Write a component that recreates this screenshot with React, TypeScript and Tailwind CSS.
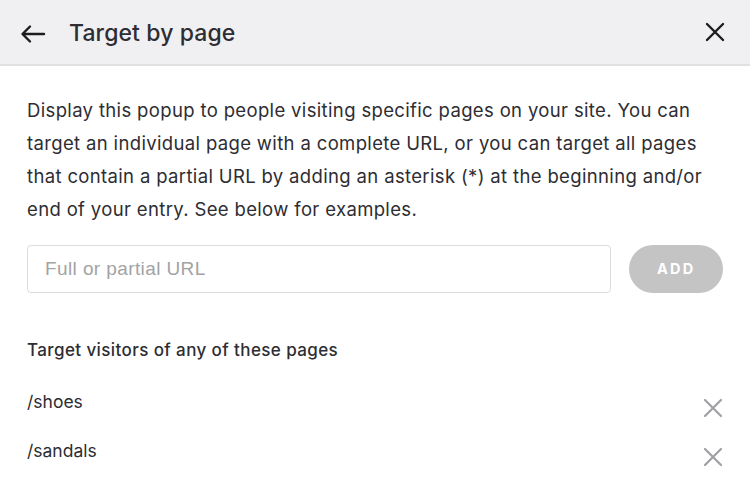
import React from "react";

const XIcon = ({ className }: { className?: string }) => (
  <svg viewBox="0 0 24 24" className={className} fill="none" stroke="currentColor" strokeLinecap="round">
    <path d="M4 4L20 20M20 4L4 20" />
  </svg>
);

const pages = ["/shoes", "/sandals"];

const App = () => {
  const [url, setUrl] = React.useState("");

  return (
    <div className="w-[750px] h-[492px] bg-white text-[#2d2d33] overflow-hidden font-['Inter',sans-serif]">
      <div className="h-[66px] flex items-center bg-[#f0f0f2] border-b-2 border-b-[#e1e1e3] pl-[20px] pr-[23px]">
        <svg viewBox="0 0 26 20" className="w-[26px] h-[20px] mt-[3px] text-[#1c1c20]" fill="none" stroke="currentColor" strokeWidth="2.4" strokeLinecap="round" strokeLinejoin="round">
          <path d="M24 10H3M10 2.5L2.5 10L10 17.5" />
        </svg>
        <h1 className="ml-[23px] mt-[3px] text-[23px] font-medium tracking-[0.1px]">Target by page</h1>
        <button className="ml-auto text-[#1c1c20]">
          <XIcon className="w-[24px] h-[24px] stroke-[2.4]" />
        </button>
      </div>

      <div className="px-[27px] pt-[28px]">
        <p className="text-[18.5px] leading-[33px] tracking-[0.35px] whitespace-nowrap">
          Display this popup to people visiting specific pages on your site. You can
          <br />
          target an individual page with a complete URL, or you can target all pages
          <br />
          that contain a partial URL by adding an asterisk (*) at the beginning and/or
          <br />
          end of your entry. See below for examples.
        </p>

        <div className="flex items-center gap-[18px] mt-[19px]">
          <input
            className="w-[586px] h-[48px] border border-[#dcdcdc] rounded-[4px] px-[17px] text-[19px] tracking-[0.4px] font-['Liberation_Sans',sans-serif] placeholder:text-[#a3a3a3] outline-none"
            placeholder="Full or partial URL"
            value={url}
            onChange={(e) => setUrl(e.target.value)}
          />
          <button className="w-[94px] h-[48px] rounded-full bg-[#c4c4c4] text-white text-[14.5px] font-bold tracking-[2.2px]">
            ADD
          </button>
        </div>

        <h2 className="mt-[45px] text-[17px] font-medium tracking-[0.4px]">Target visitors of any of these pages</h2>

        <div className="mt-[17px] flex flex-col">
          {pages.map((p) => (
            <div key={p} className="h-[49px] flex items-center justify-between -mr-[2px]">
              <span className="text-[17.5px] -mt-[6px]">{p}</span>
              <XIcon className="w-[24px] h-[24px] text-[#a0a0a4] stroke-[2.2] mt-[6px]" />
            </div>
          ))}
        </div>
      </div>
    </div>
  );
};

export default App;
